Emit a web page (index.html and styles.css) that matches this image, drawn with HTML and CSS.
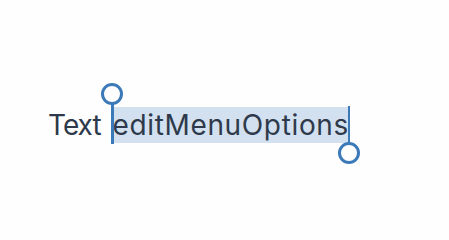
FILE: index.html
```html
<!DOCTYPE html>
<html>
<head>
<meta charset="utf-8">
<link rel="stylesheet" href="styles.css">
</head>
<body>
<main class="stage">
  <p class="line"><span class="plain">Text </span><span class="sel">editMenuOptions<span class="handle start"></span><span class="handle end"></span></span></p>
</main>
</body>
</html>
```
FILE: styles.css
```css
html, body {
  margin: 0;
  padding: 0;
  background: #fefefe;
}
.stage {
  width: 449px;
  height: 232px;
  padding: 107px 0 0 48px;
  box-sizing: border-box;
}
.line {
  margin: 0;
  font-family: Inter, "Noto Sans", sans-serif;
  font-size: 28px;
  letter-spacing: 0.65px;
  line-height: 36px;
  color: #2e3a4b;
  white-space: nowrap;
  display: flex;
}
.plain {
  white-space: pre;
  letter-spacing: -1px;
  word-spacing: 5px;
}
.sel {
  position: relative;
  background: #d3e0ef;
}
.handle {
  position: absolute;
  width: 2.8px;
  background: #3b79b9;
}
.handle::after {
  content: "";
  position: absolute;
  left: 50%;
  width: 22px;
  height: 22px;
  margin-left: -11px;
  box-sizing: border-box;
  border: 3px solid #3b79b9;
  border-radius: 50%;
  background: #fefefe;
}
.handle.start {
  left: -1.5px;
  top: -3px;
  bottom: -1px;
}
.handle.start::after {
  top: -21px;
}
.handle.end {
  right: -1.5px;
  top: -1px;
  bottom: 0px;
}
.handle.end::after {
  bottom: -21px;
}
```
